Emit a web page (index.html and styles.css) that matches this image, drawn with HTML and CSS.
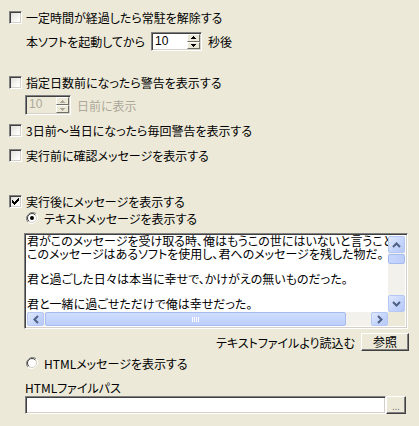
FILE: index.html
```html
<!DOCTYPE html>
<html lang="ja">

<head>
    <meta charset="UTF-8">
    <title>設定</title>
    <link rel="stylesheet" href="styles.css">
</head>

<body>
    <div id="panel">
        <div class="row r1">
            <span class="check"></span>
            <span>一定時間が経過したら常駐を解除する</span>
        </div>
        <div class="row indent r2">
            <span>本ソフトを起動してから</span>
            <span class="spin spin-time">
                <span class="spin-text">10</span>
                <span class="spin-btns">
                    <span class="spin-btn"><svg width="5" height="3" viewBox="0 0 5 3"><path d="M2 0h1v1h1v1h1v1H0V2h1V1h1z" fill="#000"/></svg></span>
                    <span class="spin-btn"><svg width="5" height="3" viewBox="0 0 5 3"><path d="M0 0h5v1H4v1H3v1H2V2H1V1H0z" fill="#000"/></svg></span>
                </span>
            </span>
            <span class="after-spin">秒後</span>
        </div>

        <div class="row r3">
            <span class="check"></span>
            <span>指定日数前になったら警告を表示する</span>
        </div>
        <div class="row indent-small r4 disabled">
            <span class="spin spin-days">
                <span class="spin-text">10</span>
                <span class="spin-btns">
                    <span class="spin-btn"><svg width="5" height="3" viewBox="0 0 5 3"><path d="M2 0h1v1h1v1h1v1H0V2h1V1h1z" fill="#aca899"/></svg></span>
                    <span class="spin-btn"><svg width="5" height="3" viewBox="0 0 5 3"><path d="M0 0h5v1H4v1H3v1H2V2H1V1H0z" fill="#aca899"/></svg></span>
                </span>
            </span>
            <span class="after-spin">日前に表示</span>
        </div>
        <div class="row r5">
            <span class="check"></span>
            <span>3日前～当日になったら毎回警告を表示する</span>
        </div>
        <div class="row r6">
            <span class="check"></span>
            <span>実行前に確認メッセージを表示する</span>
        </div>

        <div class="row r7">
            <span class="check checked">
                <svg width="7" height="7" viewBox="0 0 7 7"><path d="M0 2h1v1h1v1h1V3h1V2h1V1h1V0h1v3H6v1H5v1H4v1H3v1H2V6H1V5H0z" fill="#000"/></svg>
            </span>
            <span>実行後にメッセージを表示する</span>
        </div>
        <div class="row indent-radio r8">
            <span class="radio">
                <svg width="12" height="12" viewBox="0 0 12 12">
                    <path d="M10.2 1.8A6 6 0 0 0 1.8 10.2" fill="none" stroke="#808080" stroke-width="1"/>
                    <path d="M1.8 10.2A6 6 0 0 0 10.2 1.8" fill="none" stroke="#fff" stroke-width="1"/>
                    <circle cx="6" cy="6" r="4.5" fill="#fff" stroke="#d4d0c8" stroke-width="1"/>
                    <path d="M9.2 2.8A4.5 4.5 0 0 0 2.8 9.2" fill="none" stroke="#404040" stroke-width="1"/>
                    <circle cx="6" cy="6" r="2" fill="#000"/>
                </svg>
            </span>
            <span>テキストメッセージを表示する</span>
        </div>

        <div id="memo">
            <div id="memo-body">
                <div id="memo-text">
                    <div class="line">君がこのメッセージを受け取る時、俺はもうこの世にはいないと言うことだ</div>
                    <div class="line">このメッセージはあるソフトを使用し、君へのメッセージを残した物だ。</div>
                    <div class="line"></div>
                    <div class="line">君と過ごした日々は本当に幸せで、かけがえの無いものだった。</div>
                    <div class="line"></div>
                    <div class="line">君と一緒に過ごせただけで俺は幸せだった。</div>
                </div>
                <div class="vscroll">
                    <span class="sb-btn"><svg width="9" height="6" viewBox="0 0 9 6"><path d="M1 5l3.5-3.5L8 5" fill="none" stroke="#4d6185" stroke-width="2"/></svg></span>
                    <div class="sb-track">
                        <span class="sb-thumb-v"></span>
                    </div>
                    <span class="sb-btn"><svg width="9" height="6" viewBox="0 0 9 6"><path d="M1 1l3.5 3.5L8 1" fill="none" stroke="#4d6185" stroke-width="2"/></svg></span>
                </div>
            </div>
            <div class="hscroll">
                <span class="sb-btn"><svg width="6" height="9" viewBox="0 0 6 9"><path d="M5 1L1.5 4.5 5 8" fill="none" stroke="#4d6185" stroke-width="2"/></svg></span>
                <div class="sb-track-h">
                    <span class="sb-thumb-h">
                        <svg width="8" height="5" viewBox="0 0 8 5"><path d="M0.5 0v5M2.5 0v5M4.5 0v5M6.5 0v5" stroke="#fff" stroke-width="1"/></svg>
                    </span>
                </div>
                <span class="sb-btn"><svg width="6" height="9" viewBox="0 0 6 9"><path d="M1 1l3.5 3.5L1 8" fill="none" stroke="#4d6185" stroke-width="2"/></svg></span>
                <span class="sb-corner"></span>
            </div>
        </div>

        <div class="row load-row">
            <span>テキストファイルより読込む</span>
            <button class="btn btn-ref">参照</button>
        </div>

        <div class="row indent-radio r9">
            <span class="radio">
                <svg width="12" height="12" viewBox="0 0 12 12">
                    <path d="M10.2 1.8A6 6 0 0 0 1.8 10.2" fill="none" stroke="#808080" stroke-width="1"/>
                    <path d="M1.8 10.2A6 6 0 0 0 10.2 1.8" fill="none" stroke="#fff" stroke-width="1"/>
                    <circle cx="6" cy="6" r="4.5" fill="#fff" stroke="#d4d0c8" stroke-width="1"/>
                    <path d="M9.2 2.8A4.5 4.5 0 0 0 2.8 9.2" fill="none" stroke="#404040" stroke-width="1"/>
                </svg>
            </span>
            <span>HTMLメッセージを表示する</span>
        </div>
        <div class="row indent-small r10">
            <span>HTMLファイルパス</span>
        </div>
        <div class="path-row">
            <span class="path-input"></span>
            <button class="btn btn-dots">...</button>
        </div>
    </div>
</body>

</html>
```

FILE: styles.css
```css
* {
    box-sizing: border-box;
}

body {
    margin: 0;
    background-color: #ece9d8;
    font-family: "Noto Sans CJK JP", "Liberation Sans", sans-serif;
    font-size: 12px;
    font-feature-settings: "palt";
    color: #000;
}

#panel {
    width: 419px;
    height: 426px;
    padding: 8px 0 0 9px;
    display: flex;
    flex-direction: column;
}

.row {
    display: flex;
    align-items: center;
    height: 18px;
    gap: 4px;
    white-space: nowrap;
}

.indent {
    padding-left: 17px;
    gap: 4px;
}

.indent-small {
    padding-left: 16px;
}

.indent-radio {
    padding-left: 17px;
    gap: 6px;
}

.r2 {
    margin-top: 6px;
    height: 19px;
}

.r3 {
    margin-top: 22px;
}

.r4 {
    margin-top: 4px;
    height: 20px;
}

.r5 {
    margin-top: 6px;
}

.r6 {
    margin-top: 7px;
}

.r7 {
    margin-top: 29px;
    height: 16px;
}

.r8 {
    margin-top: 1px;
    height: 16px;
}

.disabled {
    color: #aca899;
}

/* classic checkbox */
.check {
    width: 13px;
    height: 13px;
    flex: none;
    border: 1px solid;
    border-color: #808080 #fff #fff #808080;
    box-shadow: inset 1px 1px 0 #404040, inset -1px -1px 0 #d4d0c8;
    background: linear-gradient(135deg, #dcdbd5 0%, #fff 80%);
    display: flex;
    align-items: center;
    justify-content: center;
}

.radio {
    width: 12px;
    height: 12px;
    flex: none;
    display: flex;
}

/* up-down edit */
.spin {
    display: flex;
    align-items: stretch;
    height: 19px;
    background: #fff;
    border: 1px solid;
    border-color: #808080 #fff #fff #808080;
    box-shadow: inset 1px 1px 0 #404040, inset -1px -1px 0 #d4d0c8;
    padding: 2px 2px 2px 3px;
    font-family: "Liberation Sans", sans-serif;
}

.spin-time {
    width: 51px;
    margin-left: 2px;
}

.spin-days {
    width: 46px;
    height: 20px;
}

.disabled .spin {
    background: #ece9d8;
}

.spin-text {
    flex: 1;
    line-height: 13px;
}

.spin-btns {
    width: 13px;
    display: flex;
    flex-direction: column;
    margin: -1px -1px -1px 0;
}

.spin-btn {
    flex: 1;
    background: #ece9d8;
    border: 1px solid;
    border-color: #fff #716f64 #716f64 #fff;
    display: flex;
    align-items: center;
    justify-content: center;
}

.after-spin {
    margin-left: 2px;
}

/* message box */
#memo {
    margin: 7px 0 0 15px;
    width: 384px;
    height: 96px;
    border: 1px solid;
    border-color: #808080 #fff #fff #808080;
    box-shadow: inset 1px 1px 0 #404040, inset -1px -1px 0 #d4d0c8;
    padding: 2px;
    background: #fff;
    display: flex;
    flex-direction: column;
}

#memo-body {
    flex: 1;
    display: flex;
    min-height: 0;
}

#memo-text {
    flex: 1;
    overflow: hidden;
    white-space: nowrap;
    padding-top: 0;
    margin-top: -1px;
}

.line {
    height: 12.5px;
    line-height: 12.5px;
}

.vscroll {
    width: 17px;
    display: flex;
    flex-direction: column;
    background: #f3f1ec;
}

.sb-btn {
    width: 17px;
    height: 17px;
    flex: none;
    border: 1px solid #b5c7f4;
    border-radius: 2px;
    background: linear-gradient(135deg, #e0e8fd 0%, #c3d3fb 60%, #b6c8f6 100%);
    display: flex;
    align-items: center;
    justify-content: center;
}

.sb-track {
    flex: 1;
    padding: 1px 0;
}

.sb-thumb-v {
    display: block;
    height: 10px;
    border: 1px solid #a6bbef;
    border-radius: 2px;
    background: linear-gradient(90deg, #c8d7fc, #bccdf9);
}

.hscroll {
    height: 14px;
    display: flex;
    background: #f3f1ec;
}

.hscroll .sb-btn {
    height: 14px;
}

.sb-track-h {
    flex: 1;
    padding: 0 25px 0 1px;
}

.sb-thumb-h {
    display: flex;
    height: 14px;
    align-items: center;
    justify-content: center;
    border: 1px solid #a6bbef;
    border-radius: 2px;
    background: linear-gradient(180deg, #cfdcfd, #bdcffa);
}

.sb-corner {
    width: 17px;
    background: #ece9d8;
}

/* buttons */
.btn {
    font-family: inherit;
    font-size: 12px;
    font-feature-settings: "palt";
    background: #ece9d8;
    border: 1px solid;
    border-color: #fff #404040 #404040 #fff;
    box-shadow: inset -1px -1px 0 #808080;
    padding: 0;
    color: #000;
}

.load-row {
    margin-top: 4px;
    justify-content: flex-end;
    width: 400px;
    gap: 6px;
}

.btn-ref {
    width: 48px;
    height: 18px;
    line-height: 14px;
}

.r9 {
    margin-top: 4px;
    height: 16px;
}

.r10 {
    margin-top: 8px;
    height: 16px;
}

.path-row {
    display: flex;
    margin: 1px 0 0 16px;
    height: 18px;
}

.path-input {
    width: 361px;
    background: #fff;
    border: 1px solid;
    border-color: #808080 #fff #fff #808080;
    box-shadow: inset 1px 1px 0 #404040, inset -1px -1px 0 #d4d0c8;
}

.btn-dots {
    width: 20px;
    font-size: 9px;
    color: #808080;
    line-height: 12px;
    padding-top: 3px;
}
```
